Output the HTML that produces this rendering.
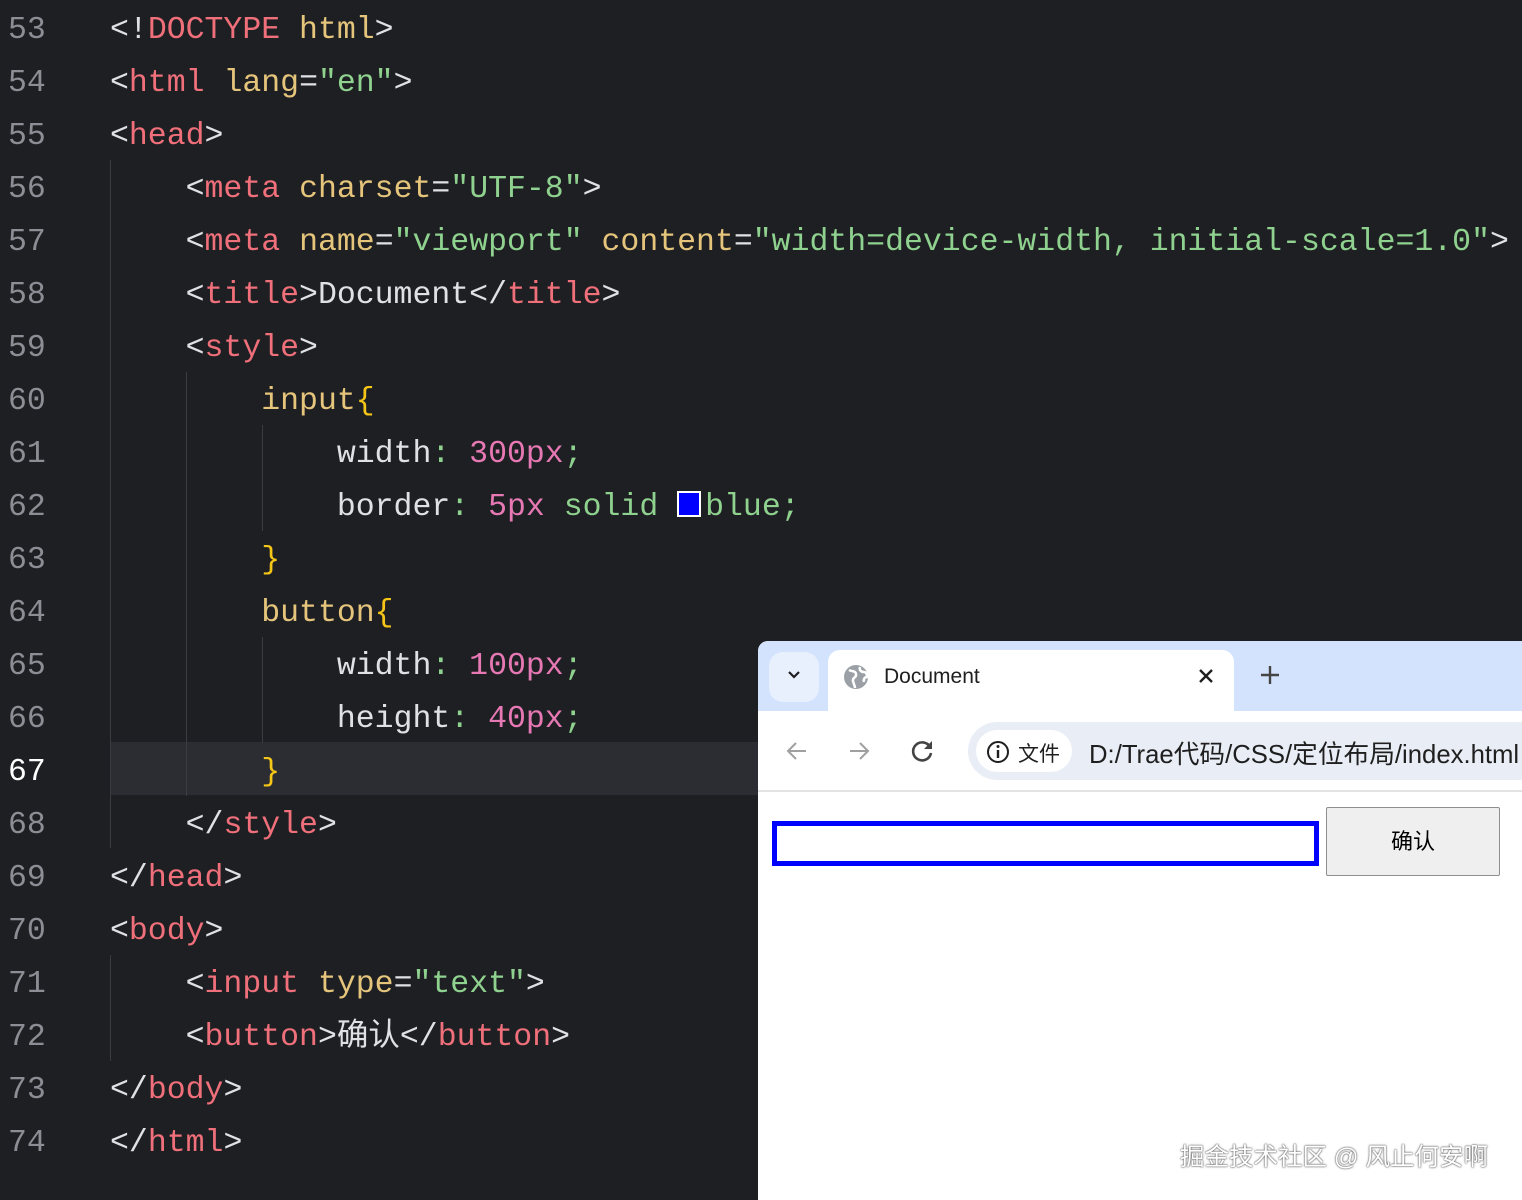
<!DOCTYPE html>
<html><head><meta charset="utf-8"><style>
html,body{margin:0;width:1522px;height:1200px;overflow:hidden}
body{background:#1e1f22;position:relative;font-family:"Liberation Mono",monospace}
.wrap{position:absolute;left:0;top:4px;width:1522px;height:1190px;overflow:hidden}
.ln{position:absolute;left:8px;font-size:31.5px;color:#8b8e94;line-height:53px;height:53px}
.cd{position:absolute;left:110px;font-size:31.5px;color:#d4d6da;line-height:53px;height:53px;white-space:pre}
.t{color:#ef6f7a}.a{color:#e5c47b}.s{color:#8fd18f}.n{color:#e678b4}.b{color:#f5c518}.p{color:#dfe1e5}.g{color:#8fd18f}
.guide{position:absolute;width:1px;background:#3a3c41}
.sans{font-family:"Liberation Sans","Noto Sans CJK SC",sans-serif}
</style></head><body>
<div style="position:absolute;left:110px;top:742px;width:650px;height:53px;background:#2b2d32"></div>
<div class="guide" style="left:110px;top:160px;height:688px"></div>
<div class="guide" style="left:186px;top:372px;height:424px"></div>
<div class="guide" style="left:262px;top:425px;height:106px"></div>
<div class="guide" style="left:262px;top:637px;height:106px"></div>
<div class="guide" style="left:110px;top:955px;height:106px"></div>
<div class="wrap">
<div class="ln" style="top:0">53</div><div class="cd" style="top:0"><span class="p">&lt;!</span><span class="t">DOCTYPE</span> <span class="a">html</span><span class="p">&gt;</span></div>
<div class="ln" style="top:53px">54</div><div class="cd" style="top:53px"><span class="p">&lt;</span><span class="t">html</span> <span class="a">lang</span><span class="p">=</span><span class="s">"en"</span><span class="p">&gt;</span></div>
<div class="ln" style="top:106px">55</div><div class="cd" style="top:106px"><span class="p">&lt;</span><span class="t">head</span><span class="p">&gt;</span></div>
<div class="ln" style="top:159px">56</div><div class="cd" style="top:159px">    <span class="p">&lt;</span><span class="t">meta</span> <span class="a">charset</span><span class="p">=</span><span class="s">"UTF-8"</span><span class="p">&gt;</span></div>
<div class="ln" style="top:212px">57</div><div class="cd" style="top:212px">    <span class="p">&lt;</span><span class="t">meta</span> <span class="a">name</span><span class="p">=</span><span class="s">"viewport"</span> <span class="a">content</span><span class="p">=</span><span class="s">"width=device-width, initial-scale=1.0"</span><span class="p">&gt;</span></div>
<div class="ln" style="top:265px">58</div><div class="cd" style="top:265px">    <span class="p">&lt;</span><span class="t">title</span><span class="p">&gt;Document&lt;/</span><span class="t">title</span><span class="p">&gt;</span></div>
<div class="ln" style="top:318px">59</div><div class="cd" style="top:318px">    <span class="p">&lt;</span><span class="t">style</span><span class="p">&gt;</span></div>
<div class="ln" style="top:371px">60</div><div class="cd" style="top:371px">        <span class="a">input</span><span class="b">{</span></div>
<div class="ln" style="top:424px">61</div><div class="cd" style="top:424px">            <span class="p">width</span><span class="g">:</span> <span class="n">300px</span><span class="g">;</span></div>
<div class="ln" style="top:477px">62</div><div class="cd" style="top:477px">            <span class="p">border</span><span class="g">:</span> <span class="n">5px</span> <span class="s">solid</span> <span style="display:inline-block;width:20px;height:22px;background:#0000ff;border:2px solid #fff;vertical-align:-2px;margin-right:4px"></span><span class="s">blue</span><span class="g">;</span></div>
<div class="ln" style="top:530px">63</div><div class="cd" style="top:530px">        <span class="b">}</span></div>
<div class="ln" style="top:583px">64</div><div class="cd" style="top:583px">        <span class="a">button</span><span class="b">{</span></div>
<div class="ln" style="top:636px">65</div><div class="cd" style="top:636px">            <span class="p">width</span><span class="g">:</span> <span class="n">100px</span><span class="g">;</span></div>
<div class="ln" style="top:689px">66</div><div class="cd" style="top:689px">            <span class="p">height</span><span class="g">:</span> <span class="n">40px</span><span class="g">;</span></div>
<div class="ln" style="top:742px;color:#fff">67</div><div class="cd" style="top:742px">        <span class="b">}</span></div>
<div class="ln" style="top:795px">68</div><div class="cd" style="top:795px">    <span class="p">&lt;/</span><span class="t">style</span><span class="p">&gt;</span></div>
<div class="ln" style="top:848px">69</div><div class="cd" style="top:848px"><span class="p">&lt;/</span><span class="t">head</span><span class="p">&gt;</span></div>
<div class="ln" style="top:901px">70</div><div class="cd" style="top:901px"><span class="p">&lt;</span><span class="t">body</span><span class="p">&gt;</span></div>
<div class="ln" style="top:954px">71</div><div class="cd" style="top:954px">    <span class="p">&lt;</span><span class="t">input</span> <span class="a">type</span><span class="p">=</span><span class="s">"text"</span><span class="p">&gt;</span></div>
<div class="ln" style="top:1007px">72</div><div class="cd" style="top:1007px">    <span class="p">&lt;</span><span class="t">button</span><span class="p">&gt;</span><span class="p" style="font-family:'Liberation Mono','Noto Sans CJK SC',monospace">确认</span><span class="p">&lt;/</span><span class="t">button</span><span class="p">&gt;</span></div>
<div class="ln" style="top:1060px">73</div><div class="cd" style="top:1060px"><span class="p">&lt;/</span><span class="t">body</span><span class="p">&gt;</span></div>
<div class="ln" style="top:1113px">74</div><div class="cd" style="top:1113px"><span class="p">&lt;/</span><span class="t">html</span><span class="p">&gt;</span></div>
</div>

<!-- browser -->
<div class="sans" style="position:absolute;left:758px;top:641px;width:764px;height:559px;background:#fff;border-top-left-radius:10px;overflow:hidden">
 <div style="position:absolute;left:0;top:0;width:764px;height:70px;background:#d3e3fd"></div>
 <div style="position:absolute;left:11px;top:11px;width:50px;height:50px;border-radius:14px;background:#e8f0fe"></div>
 <svg style="position:absolute;left:28px;top:28px" width="16" height="12"><path d="M3 3l5 5 5-5" stroke="#1f1f1f" stroke-width="2.2" fill="none"/></svg>
 <div style="position:absolute;left:70px;top:9px;width:406px;height:61px;background:#fff;border-radius:12px 12px 0 0"></div>
 <svg style="position:absolute;left:85px;top:23px" width="26" height="26" viewBox="0 0 26 26"><circle cx="13" cy="13" r="12" fill="#9aa0a6"/><path d="M6 6c3 2 6 0 7 4s-4 3-3 7 2 5 2 7M17 3c-1 3 1 5 4 5s3 4 3 5c-2 0-4 2-3 5" stroke="#fff" stroke-width="2.5" fill="none"/></svg>
 <div style="position:absolute;left:126px;top:24px;font-size:21px;color:#1f1f1f">Document</div>
 <svg style="position:absolute;left:440px;top:27px" width="16" height="16"><path d="M2 2l12 12M14 2L2 14" stroke="#1f1f1f" stroke-width="2.4"/></svg>
 <svg style="position:absolute;left:502px;top:24px" width="20" height="20"><path d="M10 1v18M1 10h18" stroke="#444" stroke-width="2.4"/></svg>
 <div style="position:absolute;left:0;top:70px;width:764px;height:80px;background:#fff"></div>
 <svg style="position:absolute;left:27px;top:98px" width="24" height="24"><path d="M21 12H4M11 4l-8 8 8 8" stroke="#a0a0a0" stroke-width="2" fill="none"/></svg>
 <svg style="position:absolute;left:89px;top:98px" width="24" height="24"><path d="M3 12h17M13 4l8 8-8 8" stroke="#a0a0a0" stroke-width="2" fill="none"/></svg>
 <svg style="position:absolute;left:152px;top:97px" width="26" height="26"><path d="M20 9A9 9 0 1 0 21 15" stroke="#444" stroke-width="2.6" fill="none"/><path d="M22 3v8h-8z" fill="#444"/></svg>
 <div style="position:absolute;left:210px;top:81px;width:580px;height:58px;background:#e9eef6;border-radius:29px"></div>
 <div style="position:absolute;left:218px;top:89px;width:96px;height:42px;background:#fff;border-radius:21px"></div>
 <svg style="position:absolute;left:228px;top:99px" width="24" height="24"><circle cx="12" cy="12" r="10" stroke="#1f1f1f" stroke-width="2" fill="none"/><path d="M12 10v8" stroke="#1f1f1f" stroke-width="2.4"/><circle cx="12" cy="6.5" r="1.5" fill="#1f1f1f"/></svg>
 <div style="position:absolute;left:260px;top:97px;font-size:21px;color:#1f1f1f">文件</div>
 <div style="position:absolute;left:331px;top:93px;font-size:25.7px;color:#1f1f1f;white-space:nowrap">D:/Trae代码/CSS/定位布局/index.html</div>
 <div style="position:absolute;left:0;top:149px;width:764px;height:2px;background:#e3e3e3"></div>
 <div style="position:absolute;left:14px;top:180px;width:537px;height:35px;border:5px solid #0000ff;background:#fff"></div>
 <div style="position:absolute;left:568px;top:166px;width:172px;height:67px;border:1px solid #8f8f8f;border-radius:2px;background:#efefef;text-align:center;line-height:67px;font-size:22px;color:#000">确认</div>
 <div style="position:absolute;left:422px;top:497px;font-size:24.5px;color:#fff;text-shadow:0 0 2px #555,0 0 1px #333;white-space:nowrap;font-family:'Liberation Sans','Noto Sans CJK SC',sans-serif">掘金技术社区 @ 风止何安啊</div>
</div>
</body></html>
